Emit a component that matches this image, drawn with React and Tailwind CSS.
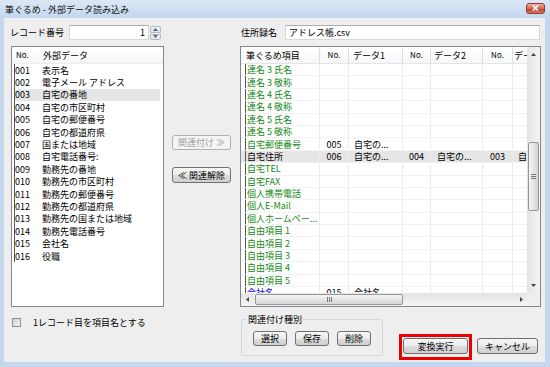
import React from 'react';

const leftRows = [
  ['001', '表示名'],
  ['002', '電子メール アドレス'],
  ['003', '自宅の番地'],
  ['004', '自宅の市区町村'],
  ['005', '自宅の郵便番号'],
  ['006', '自宅の都道府県'],
  ['007', '国または地域'],
  ['008', '自宅電話番号:'],
  ['009', '勤務先の番地'],
  ['010', '勤務先の市区町村'],
  ['011', '勤務先の郵便番号'],
  ['012', '勤務先の都道府県'],
  ['013', '勤務先の国または地域'],
  ['014', '勤務先電話番号'],
  ['015', '会社名'],
  ['016', '役職'],
];

const rightRows = [
  { name: '連名 3 氏名' },
  { name: '連名 3 敬称' },
  { name: '連名 4 氏名' },
  { name: '連名 4 敬称' },
  { name: '連名 5 氏名' },
  { name: '連名 5 敬称' },
  { name: '自宅郵便番号', c: ['005', '自宅の...'] },
  { name: '自宅住所', sel: true, c: ['006', '自宅の...', '004', '自宅の...', '003', '自'] },
  { name: '自宅TEL' },
  { name: '自宅FAX' },
  { name: '個人携帯電話' },
  { name: '個人E-Mail' },
  { name: '個人ホームペー...' },
  { name: '自由項目 1' },
  { name: '自由項目 2' },
  { name: '自由項目 3' },
  { name: '自由項目 4' },
  { name: '自由項目 5' },
  { name: '会社名', blue: true, c: ['015', '会社名'] },
];

function Btn({ children, className = '', disabled }) {
  return (
    <div
      className={`flex items-center justify-center rounded-[3px] border leading-none ${
        disabled
          ? 'border-[#adb2b5] bg-[#f4f4f4] text-[#a0a0a0]'
          : 'border-[#707070] bg-[linear-gradient(#f6f6f6_0%,#ebebeb_50%,#dddddd_51%,#cfcfcf_100%)] text-black'
      } ${className}`}
    >
      {children}
    </div>
  );
}

function Spinner() {
  return (
    <div className="ml-[1px] mt-[1px] w-[11px] h-[14px] flex flex-col gap-[1px] self-start">
      <div className="flex-1 rounded-t-[2px] border border-[#b4b8bd] bg-[linear-gradient(#f4f6f8,#dce2e9)] flex items-center justify-center">
        <svg width="5" height="3" viewBox="0 0 5 3"><path d="M0 3 L2.5 0 L5 3Z" fill="#4d6185" /></svg>
      </div>
      <div className="flex-1 rounded-b-[2px] border border-[#b4b8bd] bg-[linear-gradient(#f4f6f8,#dce2e9)] flex items-center justify-center">
        <svg width="5" height="3" viewBox="0 0 5 3"><path d="M0 0 L2.5 3 L5 0Z" fill="#4d6185" /></svg>
      </div>
    </div>
  );
}

function VScroll() {
  return (
    <div className="w-[13px] shrink-0 flex flex-col bg-[linear-gradient(90deg,#e4e4e4,#f4f4f4)]">
      <div className="h-[15px] flex items-center justify-center">
        <svg width="5" height="3" viewBox="0 0 5 3"><path d="M0 3 L2.5 0 L5 3Z" fill="#444" /></svg>
      </div>
      <div className="h-[80px]" />
      <div className="h-[69px] mx-[1px] rounded-[2px] border border-[#979797] bg-[linear-gradient(90deg,#f5f5f5,#e6e6e6_50%,#d4d4d4)] flex items-center justify-center">
        <svg width="5" height="5" viewBox="0 0 5 5"><path d="M0 0.5 H5 M0 2.5 H5 M0 4.5 H5" stroke="#777" strokeWidth="1" /></svg>
      </div>
      <div className="flex-1" />
      <div className="h-[15px] flex items-center justify-center">
        <svg width="5" height="3" viewBox="0 0 5 3"><path d="M0 0 L2.5 3 L5 0Z" fill="#444" /></svg>
      </div>
    </div>
  );
}

function HScroll() {
  return (
    <div className="h-[13px] shrink-0 flex">
      <div className="flex-1 flex bg-[linear-gradient(#e4e4e4,#f4f4f4)]">
        <div className="w-[12px] flex items-center justify-center">
          <svg width="3" height="5" viewBox="0 0 3 5"><path d="M3 0 L0 2.5 L3 5Z" fill="#444" /></svg>
        </div>
        <div className="ml-[2px] w-[148px] my-[1px] rounded-[2px] border border-[#979797] bg-[linear-gradient(#f5f5f5,#e6e6e6_50%,#d4d4d4)] flex items-center justify-center">
          <svg width="5" height="5" viewBox="0 0 5 5"><path d="M0.5 0 V5 M2.5 0 V5 M4.5 0 V5" stroke="#777" strokeWidth="1" /></svg>
        </div>
        <div className="flex-1" />
        <div className="w-[12px] flex items-center justify-center">
          <svg width="3" height="5" viewBox="0 0 3 5"><path d="M0 0 L3 2.5 L0 5Z" fill="#444" /></svg>
        </div>
      </div>
      <div className="w-[13px] bg-[#eeeeee]" />
    </div>
  );
}

function RightRow({ r }) {
  const c = r.c || [];
  const color = r.sel ? 'text-black' : r.blue ? 'text-[#0000ee]' : 'text-[#168a16]';
  return (
    <div className={`flex h-[12.4px] shrink-0 border-b border-[#f2f2f2] ${r.sel ? 'bg-[#e6e6e6]' : ''}`}>
      <div className="w-[4px] shrink-0" />
      <div className={`w-[75px] shrink-0 flex items-center border-l border-l-[#555] border-r border-r-[#ececec] pl-[1px] whitespace-nowrap ${color}`}>{r.name}</div>
      <div className="w-[29px] shrink-0 flex items-center justify-center border-r border-[#ececec]">{c[0]}</div>
      <div className="w-[54px] shrink-0 flex items-center pl-[5px] border-r border-[#ececec] whitespace-nowrap">{c[1]}</div>
      <div className="w-[28px] shrink-0 flex items-center justify-center border-r border-[#ececec]">{c[2]}</div>
      <div className="w-[52px] shrink-0 flex items-center pl-[6px] border-r border-[#ececec] whitespace-nowrap">{c[3]}</div>
      <div className="w-[30px] shrink-0 flex items-center justify-center border-r border-[#ececec]">{c[4]}</div>
      <div className="w-[40px] shrink-0 flex items-center pl-[5px]">{c[5]}</div>
    </div>
  );
}

export default function App() {
  return (
    <div className="w-[550px] h-[367px] overflow-hidden bg-[#c4d7ee] font-['Noto_Sans_CJK_JP','Noto_Sans',sans-serif] text-[9px] leading-none text-black flex flex-col">
      {/* title bar */}
      <div className="h-[18px] shrink-0 flex items-center pl-[5px] pr-[5px] bg-[linear-gradient(#dbe7f5,#c4d7ee)]">
        <span className="text-[#111]">筆ぐるめ - 外部データ読み込み</span>
        <div className="ml-auto mb-[2px] w-[19px] h-[11px] rounded-[3px] border border-[#8b3a2c] bg-[linear-gradient(#ecb3a6,#d4644e_50%,#bb3b26_51%,#d9765f)] flex items-center justify-center">
          <svg width="7" height="6" viewBox="0 0 7 6"><path d="M1 0.5 L6 5.5 M6 0.5 L1 5.5" stroke="white" strokeWidth="1.6" /></svg>
        </div>
      </div>

      {/* body */}
      <div className="ml-[4px] w-[541px] h-[344px] shrink-0 bg-[#eeeeee] flex pl-[7px] pr-[4px]">
        {/* left column */}
        <div className="w-[153px] shrink-0 flex flex-col pt-[7px]">
          <div className="flex h-[15px] items-center -ml-[1px]">
            <span className="w-[59px]">レコード番号</span>
            <div className="w-[80px] h-[15px] border border-[#d5d8dd] border-t-[#abadb3] bg-white flex items-center justify-end pr-[3px]">1</div>
            <Spinner />
          </div>
          <div className="mt-[6px] h-[261px] border border-[#828790] bg-white flex flex-col overflow-hidden">
            <div className="h-[17px] shrink-0 flex items-center border-b border-[#ededed] bg-[linear-gradient(#ffffff,#f6f7f9)]">
              <span className="pl-[4px] w-[31px] text-[8px]">No.</span>
              <span>外部データ</span>
            </div>
            {leftRows.map(([n, t]) => (
              <div key={n} className="flex h-[12.4px] shrink-0">
                <div className={`ml-[2px] w-[146px] flex items-center border-l border-[#555] ${n === '003' ? 'bg-[#e6e6e6]' : ''}`}>
                  <span className="w-[27px]">{n}</span>
                  <span className="whitespace-nowrap">{t}</span>
                </div>
              </div>
            ))}
          </div>
          <div className="mt-[11px] flex items-center">
            <div className="ml-[1px] w-[9px] h-[9px] border border-[#8e8f8f] bg-[linear-gradient(135deg,#d2d2d2,#f0f0f0)]" />
            <span className="ml-[12px]">1レコード目を項目名とする</span>
          </div>
        </div>

        {/* middle column */}
        <div className="w-[76px] shrink-0 flex flex-col pt-[117px] pl-[8px]">
          <Btn disabled className="w-[59px] h-[15px]">関連付け ≫</Btn>
          <Btn className="mt-[17px] w-[59px] h-[16px]">≪ 関連解除</Btn>
        </div>

        {/* right column */}
        <div className="w-[301px] shrink-0 flex flex-col pt-[7px]">
          <div className="flex h-[15px] items-center">
            <span className="ml-[1px] w-[44px]">住所録名</span>
            <div className="w-[255px] h-[15px] border border-[#d5d8dd] border-t-[#abadb3] bg-white flex items-center pl-[3px]">アドレス帳.csv</div>
          </div>
          <div className="mt-[6px] h-[261px] border border-[#828790] bg-white flex flex-col overflow-hidden">
            <div className="flex h-[246px] shrink-0">
              <div className="w-[286px] shrink-0 flex flex-col overflow-hidden">
                <div className="h-[17px] shrink-0 flex bg-[linear-gradient(#ffffff,#f6f7f9)] border-b border-[#e5e5e5]">
                  <div className="w-[79px] shrink-0 flex items-center pl-[5px] border-r border-[#dedede] whitespace-nowrap">筆ぐるめ項目</div>
                  <div className="w-[29px] shrink-0 flex items-center justify-center border-r border-[#dedede] text-[8px]">No.</div>
                  <div className="w-[54px] shrink-0 flex items-center pl-[4px] border-r border-[#dedede]">データ1</div>
                  <div className="w-[28px] shrink-0 flex items-center justify-center border-r border-[#dedede] text-[8px]">No.</div>
                  <div className="w-[52px] shrink-0 flex items-center pl-[3px] border-r border-[#dedede]">データ2</div>
                  <div className="w-[30px] shrink-0 flex items-center justify-center border-r border-[#dedede] text-[8px]">No.</div>
                  <div className="w-[40px] shrink-0 flex items-center pl-[1px] whitespace-nowrap">データ3</div>
                </div>
                {rightRows.map((r) => (
                  <RightRow key={r.name} r={r} />
                ))}
              </div>
              <VScroll />
            </div>
            <HScroll />
          </div>

          {/* bottom */}
          <div className="mt-[8px] flex items-start">
            <fieldset className="ml-[1px] w-[142px] h-[41px] border border-[#d0d9df] rounded-[3px] pl-[5px]">
              <legend className="px-[1px]">関連付け種別</legend>
              <div className="mt-[7px] ml-[6px] flex gap-[8px]">
                <Btn className="w-[34px] h-[15px]">選択</Btn>
                <Btn className="w-[34px] h-[15px]">保存</Btn>
                <Btn className="w-[34px] h-[15px]">削除</Btn>
              </div>
            </fieldset>
            <div className="ml-[16px] mt-[19px] border-[3px] border-[#ee0000] px-[1px] pt-[1px] pb-[3px]">
              <Btn className="w-[65px] h-[16px]">変換実行</Btn>
            </div>
            <Btn className="ml-[5px] mt-[23px] w-[61px] h-[16px]">キャンセル</Btn>
          </div>
        </div>
      </div>
    </div>
  );
}
